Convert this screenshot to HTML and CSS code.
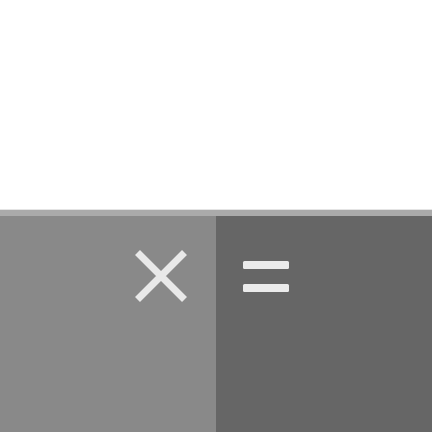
FILE: index.html
```html
<!DOCTYPE html>
<html>
<head>
<meta charset="utf-8">
<link rel="stylesheet" href="styles.css">
</head>
<body>
<div class="top"></div>
<div class="strip"></div>
<div class="keys">
  <div class="panel left">
    <svg class="times" width="52" height="52" viewBox="0 0 52 52">
      <path d="M2.5 2.5 L49.5 49.5 M49.5 2.5 L2.5 49.5" stroke="#e9e9e9" stroke-width="7" fill="none"/>
    </svg>
  </div>
  <div class="panel right">
    <div class="equals">
      <div class="bar"></div>
      <div class="bar"></div>
    </div>
  </div>
</div>
</body>
</html>
```
FILE: styles.css
```css
html, body {
  margin: 0;
  padding: 0;
  width: 432px;
  height: 432px;
  overflow: hidden;
  background: #ffffff;
}
.top {
  height: 209px;
  background: #ffffff;
}
.strip {
  height: 6px;
  border-top: 1px solid #e4e4e4;
  background: #aaaaaa;
}
.keys {
  display: grid;
  grid-template-columns: 216px 216px;
  height: 216px;
}
.panel {
  display: flex;
  align-items: flex-start;
}
.left {
  background: #898989;
  justify-content: flex-end;
  padding: 34px 29px 0 0;
}
.right {
  background: #666666;
  padding: 45px 0 0 27px;
}
.times {
  display: block;
}
.equals {
  display: flex;
  flex-direction: column;
  gap: 15px;
}
.bar {
  width: 46px;
  height: 8px;
  border-radius: 1.5px;
  background: #ebebeb;
}
```
